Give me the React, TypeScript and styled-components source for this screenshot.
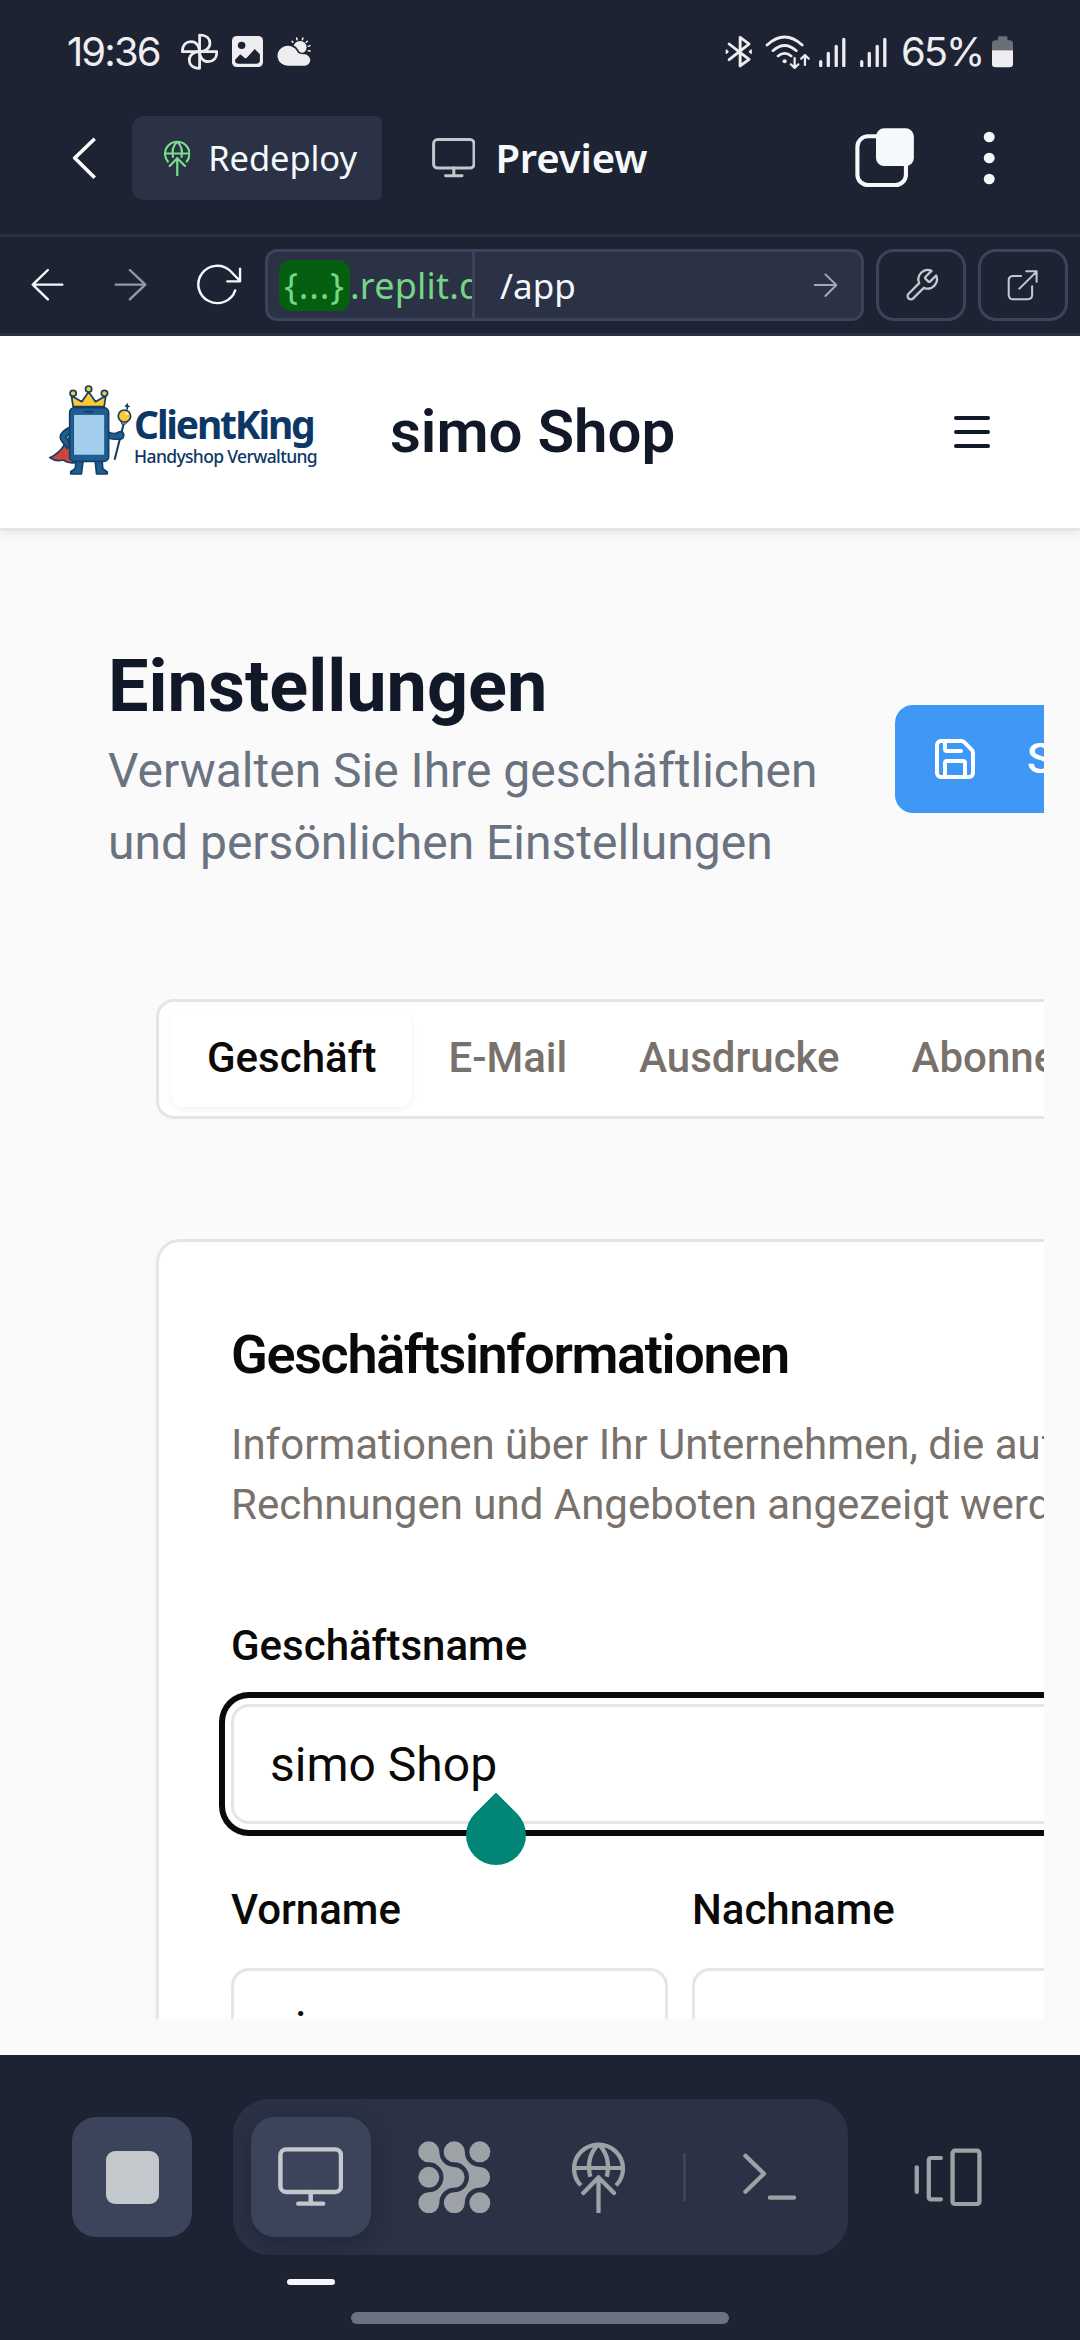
import React from "react";
import styled, { createGlobalStyle, css } from "styled-components";
import { Menu, Save } from "lucide-react";

const c = {
  chrome: "#1d2333",
  panel: "#2b3245",
  raised: "#3c445c",
  ink: "#f5f9fc",
  soft: "#c2c8cc",
  dim: "#9da2a6",
  line: "#e5e5e5",
  black: "#0c0a09",
  muted: "#79716b",
  page: "#fafafb",
};
const plex = `"Noto Sans", "Open Sans", sans-serif`;

const Global = createGlobalStyle`
  *, *::before, *::after { box-sizing: border-box; }
  body { margin: 0; background: ${c.chrome}; font-family: Roboto, sans-serif; }
  svg { display: block; flex: none; }
`;

const Screen = styled.div`
  width: 1080px;
  height: 2340px;
  display: flex;
  flex-direction: column;
  overflow: hidden;
  background: ${c.chrome};
`;

/* ---------- drawing helper ---------- */

type GlyphProps = {
  box: [number, number, number, number];
  scale?: number;
  color?: string;
  stroke?: number;
  children: React.ReactNode;
};

const Glyph = ({ box, scale = 1, color = c.ink, stroke = 7, children }: GlyphProps) => (
  <svg
    width={(box[2] / 2.904) * scale}
    height={(box[3] / 3) * scale}
    viewBox={box.join(" ")}
    preserveAspectRatio="none"
    fill="none"
    stroke={color}
    strokeWidth={stroke}
    strokeLinecap="round"
    strokeLinejoin="round"
  >
    {children}
  </svg>
);

const GlobeUp = ({ scale = 1, color = c.dim }: { scale?: number; color?: string }) => (
  <Glyph box={[94, 302, 154, 218]} scale={scale} color={color} stroke={12.5}>
    <path strokeLinecap="butt" d="M120 435 A71 72 0 1 1 222 435" />
    <path strokeLinecap="butt" d="M100 383 H242 M171 311 C148 335 138 370 147 409 M171 311 C194 335 204 370 195 409" />
    <path d="M171 514 V411 M127 458 L171 411 L216 458" />
  </Glyph>
);

const MonitorIcon = ({ scale = 1 }: { scale?: number }) => (
  <Glyph box={[808, 322, 190, 178]} scale={scale} color={c.soft} stroke={13}>
    <rect x="815" y="329" width="176" height="128" rx="17" />
    <path d="M903 457 V492 M867 492 H939" />
  </Glyph>
);

/* ---------- status bar ---------- */

const StatusBar = styled.div`
  height: 82px;
  flex: none;
  padding: 22px 67px 0 67px;
  display: flex;
  align-items: center;
`;
const StatusText = styled.span<{ $w: number; $ls: number }>`
  width: ${(p) => p.$w}px;
  font: 400 40px/60px Inter, Roboto, sans-serif;
  letter-spacing: ${(p) => p.$ls}px;
  color: #eeeef1;
  white-space: nowrap;
`;
const StatusGroup = styled.div<{ $gap: number; $push?: boolean; $inset?: boolean }>`
  display: flex;
  align-items: center;
  gap: ${(p) => p.$gap}px;
  ${(p) => p.$push && css`margin-left: auto;`}
  ${(p) => p.$inset && css`margin-left: 9px;`}
`;
const light = "#eeeef1";
const blade = "M579 157 V107 C600 107 609 119 609 132 C609 147 596 157 579 157";

const Signal = () => (
  <Glyph box={[813, 108, 78, 92]} color={light} stroke={9.5}>
    <path d="M818 182 V194 M840 157 V194 M863 136 V194 M885 115 V194" />
  </Glyph>
);

/* ---------- workspace toolbar ---------- */

const Toolbar = styled.div`
  height: 155px;
  flex: none;
  display: flex;
  align-items: center;
  padding: 0 83px 0 72px;
  border-bottom: 3px solid ${c.panel};
`;
const Redeploy = styled.div`
  width: 250px;
  height: 84px;
  margin-left: 36px;
  padding-left: 32px;
  display: flex;
  align-items: center;
  gap: 18px;
  background: ${c.panel};
  border-radius: 12px 6px 6px 12px;
  color: ${c.ink};
  font: 400 34.5px/48px ${plex};
  letter-spacing: -0.1px;
`;
const PaneTitle = styled.div`
  margin-left: 50px;
  display: flex;
  align-items: center;
  gap: 20px;
  color: ${c.ink};
  font: 600 40px/60px ${plex};
  letter-spacing: -0.1px;
`;
const ToolbarEnd = styled.div`
  margin-left: auto;
  display: flex;
  align-items: center;
  gap: 68px;
`;

/* ---------- address bar ---------- */

const AddressBar = styled.div`
  height: 99px;
  flex: none;
  display: flex;
  align-items: center;
  padding: 0 12px 0 31px;
  border-bottom: 3px solid ${c.panel};
`;
const NavIcons = styled.div`
  width: 234px;
  display: flex;
  align-items: center;
  gap: 50px;
`;
const UrlBox = styled.div`
  width: 599px;
  height: 72px;
  display: flex;
  border: 3px solid ${c.raised};
  border-radius: 12px;
  background: ${c.panel};
  font: 400 36px/51px ${plex};
  overflow: hidden;
`;
const UrlHost = styled.div`
  width: 207px;
  padding: 8px 0 0 11px;
  display: flex;
  overflow: hidden;
  white-space: nowrap;
  color: #74d685;
  border-right: 3px solid ${c.raised};
  letter-spacing: 0.2px;
`;
const Chip = styled.span`
  flex: none;
  width: 71px;
  height: 51px;
  text-align: center;
  border-radius: 12px;
  background: #045f10;
  letter-spacing: 0.8px;
`;
const UrlPath = styled.div`
  flex: 1;
  padding: 0 23px 0 25px;
  display: flex;
  align-items: center;
  justify-content: space-between;
  color: ${c.ink};
  font-size: 35px;
`;
const SquareButton = styled.div`
  width: 90px;
  height: 72px;
  margin-left: 12px;
  display: flex;
  align-items: center;
  justify-content: center;
  border: 3px solid ${c.raised};
  border-radius: 18px;
`;

/* ---------- shop page ---------- */

const ShopHeader = styled.header`
  position: relative;
  z-index: 1;
  height: 195px;
  flex: none;
  display: flex;
  align-items: center;
  padding: 0 84px 0 48px;
  background: #fff;
  border-bottom: 3px solid ${c.line};
  box-shadow: 0 3px 9px rgba(0, 0, 0, 0.07);
`;
const Logo = styled.div`
  width: 342px;
  padding-bottom: 4px;
  display: flex;
  align-items: center;
`;
const LogoWords = styled.div`
  display: flex;
  flex-direction: column;
  color: #0d3766;
  white-space: nowrap;
  padding-top: 12px;
`;
const LogoName = styled.span`
  font: 700 39px/40px "Noto Sans", "Open Sans", sans-serif;
  letter-spacing: -2.2px;
`;
const LogoSub = styled.span`
  font: 500 17.5px/24px "Noto Sans", "Open Sans", sans-serif;
  letter-spacing: -0.65px;
`;
const ShopTitle = styled.h1`
  margin: 0;
  flex: 1;
  font-size: 60px;
  line-height: 84px;
  font-weight: 600;
  color: #111827;
`;
const Page = styled.main`
  height: 1524px;
  flex: none;
  padding: 0 36px 36px;
  background: ${c.page};
`;
const Clip = styled.div`
  height: 100%;
  padding: 108px 0 0 72px;
  overflow: hidden;
`;
const PageHead = styled.div`
  width: 1200px;
  height: 240px;
  display: flex;
  align-items: center;
`;
const PageIntro = styled.div`
  width: 787px;
  flex: none;
`;
const PageTitle = styled.h2`
  margin: 0;
  font-size: 72px;
  line-height: 96px;
  font-weight: 700;
  color: #111827;
`;
const PageText = styled.p`
  margin: 0;
  font-size: 48px;
  line-height: 72px;
  color: #6b7280;
  white-space: nowrap;
`;
const SaveButton = styled.div`
  width: 320px;
  height: 108px;
  padding-left: 36px;
  display: flex;
  align-items: center;
  gap: 48px;
  border-radius: 18px;
  background: #3f98f6;
  color: #fff;
  font-size: 42px;
  font-weight: 500;
  line-height: 60px;
  padding-bottom: 1px;
`;
const Sections = styled.div`
  width: 1048px;
  margin: 120px 0 0 48px;
  display: flex;
  flex-direction: column;
  gap: 120px;
`;
const Tabs = styled.div`
  height: 120px;
  padding: 9px 12px;
  display: flex;
  background: #fff;
  border: 3px solid ${c.line};
  border-radius: 18px;
`;
const Tab = styled.div<{ $active?: boolean }>`
  height: 96px;
  flex: none;
  padding: 0 36px;
  border-radius: 12px;
  font-size: 42px;
  line-height: 93px;
  font-weight: 500;
  white-space: nowrap;
  color: ${(p) => (p.$active ? c.black : c.muted)};
  ${(p) => p.$active && css`box-shadow: 0 3px 6px rgba(0, 0, 0, 0.05);`}
`;
const Card = styled.section`
  height: 1100px;
  padding: 72px;
  background: #fff;
  border: 3px solid ${c.line};
  border-radius: 24px;
  box-shadow: 0 3px 6px rgba(0, 0, 0, 0.05);
`;
const CardTitle = styled.h3`
  margin: 0;
  font-size: 54px;
  line-height: 81px;
  font-weight: 600;
  letter-spacing: -1.35px;
  color: ${c.black};
`;
const CardText = styled.p`
  margin: 20px 0 0;
  font-size: 42px;
  line-height: 60px;
  color: ${c.muted};
  white-space: nowrap;
`;
const Form = styled.div`
  margin-top: 69px;
  display: grid;
  grid-template-columns: 1fr 1fr;
  gap: 44px 24px;
`;
const Field = styled.div<{ $wide?: boolean }>`
  display: flex;
  flex-direction: column;
  gap: 16px;
  ${(p) => p.$wide && css`grid-column: 1 / -1;`}
`;
const Label = styled.label`
  font-size: 42px;
  line-height: 84px;
  font-weight: 500;
  color: ${c.black};
`;
const Input = styled.div<{ $focus?: boolean }>`
  height: 120px;
  padding: 0 36px;
  border: 3px solid ${c.line};
  border-radius: 18px;
  background: #fff;
  font-size: 48px;
  line-height: 115px;
  color: ${c.black};
  ${(p) =>
    p.$focus &&
    css`
      position: relative;
      box-shadow: 0 0 0 6px #fff, 0 0 0 12px ${c.black};
    `}
`;
const CaretHandle = styled.span`
  position: absolute;
  left: 232px;
  top: 98px;
  width: 60px;
  height: 60px;
  border-radius: 0 50% 50% 50%;
  transform: rotate(45deg);
  background: #008577;
`;

/* ---------- bottom dock ---------- */

const Dock = styled.nav`
  height: 285px;
  flex: none;
  padding: 44px 72px 0;
  display: flex;
  flex-direction: column;
`;
const DockRow = styled.div`
  display: flex;
  align-items: center;
  justify-content: space-between;
`;
const DockGroup = styled.div`
  padding: 18px;
  display: flex;
  align-items: center;
  gap: 24px;
  background: ${c.panel};
  border-radius: 36px;
`;
const DockButton = styled.div<{ $filled?: boolean; $shadow?: boolean }>`
  width: 120px;
  height: 120px;
  display: flex;
  align-items: center;
  justify-content: center;
  border-radius: 24px;
  background: ${(p) => (p.$filled ? c.raised : "transparent")};
  ${(p) => p.$shadow && css`box-shadow: 0 6px 24px rgba(20, 24, 38, 0.45);`}
`;
const StopSquare = styled.span`
  width: 53px;
  height: 53px;
  border-radius: 9px;
  background: ${c.soft};
`;
const DockDivider = styled.span`
  width: 3px;
  height: 48px;
  background: ${c.raised};
`;
const Indicator = styled.span`
  width: 48px;
  height: 6px;
  margin: 24px 0 0 215px;
  border-radius: 3px;
  background: #f6f7ff;
`;
const HomeBar = styled.span`
  width: 378px;
  height: 12px;
  margin-top: 27px;
  align-self: center;
  border-radius: 6px;
  background: #6e717e;
`;

const blob =
  "M1247 303 A30.5 31.5 0 0 1 1278 335 A43 45 0 0 0 1321 380 A30.5 31 0 0 1 1321 442 A43 45 0 0 0 1278 487 A30.5 31.5 0 1 1 1247 456 A43 45 0 0 0 1247 366 A30.5 31.5 0 0 1 1247 303 Z";

const Mascot = () => (
  <Glyph box={[140, 492, 250, 278]} color="#133f66" stroke={5}>
    <path d="M190 670 Q174 700 145 713 Q162 726 184 720 Q198 732 222 727 L206 645 Z" fill="#c9473b" />
    <path d="M222 722 L219 746 L206 755 V762 H237 L242 722 Z M277 722 L281 762 H312 V756 L299 746 L297 722 Z" fill="#1d5f94" />
    <path d="M203 622 Q168 640 178 660 L196 686 L203 670 L192 652 L204 640 Z" fill="#1d5f94" />
    <rect x="203" y="563" width="113" height="161" rx="14" fill="#1d5f94" />
    <rect x="214" y="583" width="91" height="123" rx="4" fill="#a3cdec" stroke="#1a4f7e" strokeWidth="3" />
    <path d="M248 575 H271" strokeWidth="5" />
    <path d="M213 560 L208 527 L238 545 L258 515 L278 545 L308 527 L303 560 Z" fill="#fcc834" />
    <circle cx="213" cy="520" r="9" fill="#fcc834" />
    <circle cx="258" cy="507" r="9" fill="#fcc834" />
    <circle cx="304" cy="520" r="9" fill="#fcc834" />
    <path d="M334 717 L361 607" strokeWidth="6" />
    <path d="M351 603 L373 603 L365 612 H355 Z" fill="#fcc834" strokeWidth="3" />
    <path d="M317 637 Q335 645 346 636 Q360 632 360 646 Q358 660 346 657 Q330 659 317 655 Z" fill="#1d5f94" />
    <circle cx="362" cy="588" r="18" fill="#fcc834" />
    <circle cx="369" cy="581" r="4" fill="#fff3b8" stroke="none" />
    <path d="M370 552 V567 M365 558 L375 559" />
  </Glyph>
);

export default function App() {
  return (
    <Screen>
      <Global />
      <StatusBar>
        <StatusText $w={114} $ls={-1.9}>19:36</StatusText>
        <StatusGroup $gap={14}>
          <Glyph box={[525, 101, 108, 112]} color={light} stroke={8}>
            <path d={blade} />
            <path d={blade} transform="rotate(90 579 157)" />
            <path d={blade} transform="rotate(180 579 157)" />
            <path d={blade} transform="rotate(270 579 157)" />
          </Glyph>
          <Glyph box={[671, 111, 90, 93]}>
            <rect x="671" y="111" width="90" height="93" rx="14" fill={light} stroke="none" />
            <circle cx="699" cy="139" r="11" fill={c.chrome} stroke="none" />
            <path d="M680 182 L695 166 L708 177 Q712 179 716 174 L737 150 L752 166 V187 Q750 194 743 194 H688 Q680 193 680 186 Z" fill={c.chrome} stroke="none" />
          </Glyph>
          <Glyph box={[803, 112, 98, 88]} color={light} stroke={4.5}>
            <path d="M847 125 L849 128 M860 115 L861 120 M878 115 L877 120 M891 125 L888 128 M899 138 L894 140 M899 154 L894 153" />
            <circle cx="870" cy="143" r="19" fill={light} stroke="none" />
            <path d="M834 198 A30 30 0 1 1 861 154 Q865 164 880 164 A18 17 0 0 1 883 198 Z" fill={c.chrome} stroke={c.chrome} strokeWidth="10" />
            <path d="M834 198 A30 30 0 1 1 861 154 Q865 164 880 164 A18 17 0 0 1 883 198 Z" fill={light} stroke="none" />
          </Glyph>
        </StatusGroup>
        <StatusGroup $gap={12} $push>
          <Glyph box={[538, 106, 82, 100]} color={light} stroke={8.5}>
            <path d="M550 133 L608 179 L582 199 V113 L608 133 L550 180" />
            <path d="M542 151 L547 156 L542 161 Z M614 151 L609 156 L614 161 Z" fill={light} strokeWidth="4" />
          </Glyph>
          <Glyph box={[655, 102, 131, 104]} color={light} stroke={8}>
            <path d="M661 132 Q712 84 763 132 M678 149 Q712 118 746 149 M693 165 Q712 149 731 165" />
            <circle cx="712" cy="181" r="6" fill={light} stroke="none" />
            <path d="M741 171 V200 M730 190 L741 201 L752 190 M771 192 V163 M760 173 L771 162 L782 173" strokeWidth="6.5" />
          </Glyph>
        </StatusGroup>
        <StatusGroup $gap={14} $inset>
          <StatusGroup $gap={14}>
            <Signal />
            <Signal />
          </StatusGroup>
          <StatusText $w={77} $ls={-2.1}>65%</StatusText>
          <Glyph box={[1312, 107, 61, 95]} stroke={0}>
            <path d="M1329 120 V111 Q1329 108 1333 108 H1353 Q1357 108 1357 111 V120 H1364 Q1373 121 1373 130 V150 H1312 V130 Q1312 121 1321 120 Z" fill="#6b6f7a" />
            <path d="M1312 150 H1373 V192 Q1373 201 1363 201 H1322 Q1312 201 1312 192 Z" fill={light} />
          </Glyph>
        </StatusGroup>
      </StatusBar>

      <Toolbar>
        <Glyph box={[209, 411, 69, 127]} color="#ffffff" stroke={10.5}>
          <path strokeLinecap="butt" d="M275 416 L217 474 L275 533" />
        </Glyph>
        <Redeploy>
          <GlobeUp scale={0.5} color="#79e08a" />
          Redeploy
        </Redeploy>
        <PaneTitle>
          <MonitorIcon scale={0.667} />
          Preview
        </PaneTitle>
        <ToolbarEnd>
          <Glyph box={[914, 383, 172, 179]} stroke={12}>
            <rect x="921" y="408" width="141" height="146" rx="31" />
            <rect x="975" y="384" width="110" height="113" rx="24" fill={c.ink} stroke="none" />
          </Glyph>
          <Glyph box={[1285, 390, 43, 168]} stroke={0}>
            <circle cx="1306" cy="411" r="16" fill={c.ink} />
            <circle cx="1306" cy="474" r="16" fill={c.ink} />
            <circle cx="1306" cy="537" r="16" fill={c.ink} />
          </Glyph>
        </ToolbarEnd>
      </Toolbar>

      <AddressBar>
        <NavIcons>
          <Glyph box={[92, 145, 96, 100]} stroke={7}>
            <path d="M183 195 H97 M141 151 L97 195 L141 239" />
          </Glyph>
          <Glyph box={[336, 145, 96, 100]} color="#9599a0" stroke={7}>
            <path d="M341 195 H427 M382 151 L427 195 L382 239" />
          </Glyph>
          <Glyph box={[567, 132, 132, 126]} stroke={7}>
            <path d="M678 211 A55 56 0 1 1 664 153 L692 183 M692 146 V184 H655" />
          </Glyph>
        </NavIcons>
        <UrlBox>
          <UrlHost>
            <Chip>{"{...}"}</Chip>.replit.dev
          </UrlHost>
          <UrlPath>
            /app
            <Glyph box={[791, 156, 73, 78]} color="#a5aab0" stroke={5.5}>
              <path d="M796 195 H858 M827 163 L859 195 L827 228" />
            </Glyph>
          </UrlPath>
        </UrlBox>
        <SquareButton>
          <svg width="37" height="37" viewBox="0 0 24 24" fill="none" stroke={c.soft} strokeWidth="1.5" strokeLinecap="round" strokeLinejoin="round">
            <path d="M14.7 6.3a1 1 0 0 0 0 1.4l1.6 1.6a1 1 0 0 0 1.4 0l3.77-3.77a6 6 0 0 1-7.94 7.94l-6.91 6.91a2.12 2.12 0 0 1-3-3l6.91-6.91a6 6 0 0 1 7.94-7.94l-3.76 3.76z" />
          </svg>
        </SquareButton>
        <SquareButton>
          <Glyph box={[1357, 149, 92, 93]} color={c.soft} stroke={6}>
            <path d="M1398 167 H1374 Q1362 168 1362 179 V224 Q1363 237 1375 237 H1418 Q1430 236 1430 224 V198 M1393 205 L1443 154 M1413 153 H1443 V184" />
          </Glyph>
        </SquareButton>
      </AddressBar>

      <ShopHeader>
        <Logo>
          <Mascot />
          <LogoWords>
            <LogoName>ClientKing</LogoName>
            <LogoSub>Handyshop Verwaltung</LogoSub>
          </LogoWords>
        </Logo>
        <ShopTitle>simo Shop</ShopTitle>
        <Menu size={48} strokeWidth={2} color="#111827" />
      </ShopHeader>

      <Page>
        <Clip>
          <PageHead>
            <PageIntro>
              <PageTitle>Einstellungen</PageTitle>
              <PageText>
                Verwalten Sie Ihre geschäftlichen
                <br />
                und persönlichen Einstellungen
              </PageText>
            </PageIntro>
            <SaveButton>
              <Save size={48} strokeWidth={2} />
              Speichern
            </SaveButton>
          </PageHead>
          <Sections>
            <Tabs>
              <Tab $active>Geschäft</Tab>
              <Tab>E-Mail</Tab>
              <Tab>Ausdrucke</Tab>
              <Tab>Abonnement</Tab>
            </Tabs>
            <Card>
              <CardTitle>Geschäftsinformationen</CardTitle>
              <CardText>
                Informationen über Ihr Unternehmen, die auf
                <br />
                Rechnungen und Angeboten angezeigt werden
              </CardText>
              <Form>
                <Field $wide>
                  <Label>Geschäftsname</Label>
                  <Input $focus>
                    simo Shop
                    <CaretHandle />
                  </Input>
                </Field>
                <Field>
                  <Label>Vorname</Label>
                  <Input>simo</Input>
                </Field>
                <Field>
                  <Label>Nachname</Label>
                  <Input />
                </Field>
              </Form>
            </Card>
          </Sections>
        </Clip>
      </Page>

      <Dock>
        <DockRow>
          <DockButton $filled>
            <StopSquare />
          </DockButton>
          <DockGroup>
            <DockButton $filled $shadow>
              <MonitorIcon />
            </DockButton>
            <DockButton>
              <Glyph box={[1216, 302, 211, 218]} stroke={0}>
                <g fill={c.dim}>
                  <path d={blob} />
                  <path d={blob} transform="translate(74 0)" />
                  <ellipse cx="1395.500" cy="334.500" rx="30.500" ry="31.500" />
                  <ellipse cx="1247.500" cy="411" rx="30.500" ry="31.500" />
                  <ellipse cx="1395.500" cy="487.500" rx="30.500" ry="31.500" />
                </g>
              </Glyph>
            </DockButton>
            <DockButton>
              <GlobeUp />
            </DockButton>
            <DockDivider />
            <DockButton>
              <Glyph box={[590, 340, 156, 143]} color={c.dim} stroke={12.5}>
                <path d="M597 348 L651 402 L597 456 M668 474 H738" />
              </Glyph>
            </DockButton>
          </DockGroup>
          <DockButton>
            <Glyph box={[1086, 323, 197, 175]} color={c.dim} stroke={12.5}>
              <path d="M1094 381 V455 M1164 353 H1136 Q1129 353 1129 360 V470 Q1129 477 1136 477 H1164" />
              <rect x="1198" y="331" width="78" height="160" rx="7" />
            </Glyph>
          </DockButton>
        </DockRow>
        <Indicator />
        <HomeBar />
      </Dock>
    </Screen>
  );
}
